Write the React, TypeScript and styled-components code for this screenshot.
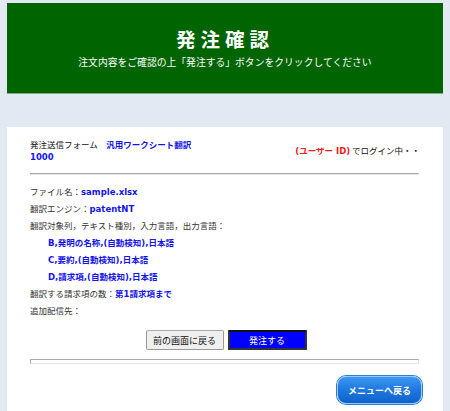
import styled, { createGlobalStyle } from "styled-components";

const GlobalStyle = createGlobalStyle`
  html, body {
    margin: 0;
    padding: 0;
    background: #e3e9f3;
  }
  body {
    font-family: "Noto Sans CJK JP", "Liberation Sans", sans-serif;
  }
`;

const Page = styled.div`
  padding: 3px 7px 0;
  height: 408px;
  overflow: hidden;
`;

const Header = styled.header`
  height: 90px;
  background: #006400;
  border-bottom: 1px solid #7fae7f;
  display: flex;
  flex-direction: column;
  align-items: center;
  justify-content: center;
  color: #fff;
`;

const Title = styled.h1`
  margin: 0;
  font-size: 19.5px;
  line-height: 22px;
  font-weight: 700;
  letter-spacing: 5px;
`;

const Subtitle = styled.p`
  margin: 5px 0 0;
  font-size: 9.8px;
  line-height: 14px;
`;

const Panel = styled.main`
  margin-top: 33px;
  background: #fff;
  padding: 12px 24px 20px 23px;
`;

const TopRow = styled.div`
  display: flex;
  align-items: center;
  justify-content: space-between;
`;

const FormName = styled.div`
  width: 168px;
  font-size: 8.5px;
  line-height: 10.5px;
  color: #111;
`;

const Login = styled.div`
  font-size: 8.5px;
  line-height: 11px;
  color: #111;
  margin-right: -1px;
`;

const Blue = styled.span`
  font-family: "DejaVu Sans", "Noto Sans CJK JP", sans-serif;
  font-size: 8.5px;
  font-weight: 700;
  color: #1414f0;
`;

const Red = styled.span`
  font-family: "DejaVu Sans", "Noto Sans CJK JP", sans-serif;
  font-size: 8.5px;
  font-weight: 700;
  color: #f01818;
`;

const Rule = styled.hr<{ $thick?: boolean }>`
  margin: ${(p) => (p.$thick ? "9px 0 12px" : "11px 0 8px")};
  height: ${(p) => (p.$thick ? "3px" : "0")};
  border-style: solid;
  border-width: 1px;
  border-color: #a8a8a8 #e6e6e6 #e6e6e6 #a8a8a8;
  background: #fff;
`;

const List = styled.div`
  display: flex;
  flex-direction: column;
`;

const Line = styled.div<{ $indent?: boolean }>`
  height: 17px;
  line-height: 17px;
  font-size: 8.5px;
  color: #333;
  padding-left: ${(p) => (p.$indent ? "18px" : "0")};
  white-space: nowrap;
`;

const Buttons = styled.div`
  display: flex;
  justify-content: center;
  gap: 4px;
  margin-top: 11px;
  padding-left: 3px;
`;

const Button = styled.button<{ $primary?: boolean }>`
  width: ${(p) => (p.$primary ? "79px" : "78px")};
  height: 20px;
  padding: 0;
  font-family: "Noto Sans CJK JP", sans-serif;
  font-size: 9px;
  cursor: pointer;
  color: ${(p) => (p.$primary ? "#fff" : "#111")};
  background: ${(p) => (p.$primary ? "#0000ff" : "#efefef")};
  border: ${(p) => (p.$primary ? "2px solid #333" : "1px solid #999")};
  border-top-color: ${(p) => (p.$primary ? "#111" : "#aaa")};
  border-radius: ${(p) => (p.$primary ? "1px" : "2px")};
`;

const MenuRow = styled.div`
  display: flex;
  justify-content: flex-end;
  margin-right: -3px;
`;

const MenuButton = styled.button`
  width: 85px;
  height: 28px;
  border-radius: 9px;
  border: 1px solid #9cc8f2;
  background: linear-gradient(#3b97f2, #1f78de 50%, #0c62cc);
  box-shadow: 0 0 0 1px #2a7fd8;
  color: #fff;
  font-family: "Noto Sans CJK JP", sans-serif;
  font-weight: 700;
  font-size: 9px;
  cursor: pointer;
`;

const columns = [
  "B,発明の名称,(自動検知),日本語",
  "C,要約,(自動検知),日本語",
  "D,請求項,(自動検知),日本語",
];

export default function App() {
  return (
    <>
      <GlobalStyle />
      <Page>
        <Header>
          <Title>発注確認</Title>
          <Subtitle>注文内容をご確認の上「発注する」ボタンをクリックしてください</Subtitle>
        </Header>
        <Panel>
          <TopRow>
            <FormName>
              発注送信フォーム　<Blue>汎用ワークシート翻訳</Blue>
              <br />
              <Blue>1000</Blue>
            </FormName>
            <Login>
              <Red>(ユーザー ID)</Red> でログイン中・・
            </Login>
          </TopRow>
          <Rule />
          <List>
            <Line>
              ファイル名：<Blue>sample.xlsx</Blue>
            </Line>
            <Line>
              翻訳エンジン：<Blue>patentNT</Blue>
            </Line>
            <Line>翻訳対象列，テキスト種別，入力言語，出力言語：</Line>
            {columns.map((c) => (
              <Line key={c} $indent>
                <Blue>{c}</Blue>
              </Line>
            ))}
            <Line>
              翻訳する請求項の数：<Blue>第1請求項まで</Blue>
            </Line>
            <Line>追加配信先：</Line>
          </List>
          <Buttons>
            <Button>前の画面に戻る</Button>
            <Button $primary>発注する</Button>
          </Buttons>
          <Rule $thick />
          <MenuRow>
            <MenuButton>メニューへ戻る</MenuButton>
          </MenuRow>
        </Panel>
      </Page>
    </>
  );
}
